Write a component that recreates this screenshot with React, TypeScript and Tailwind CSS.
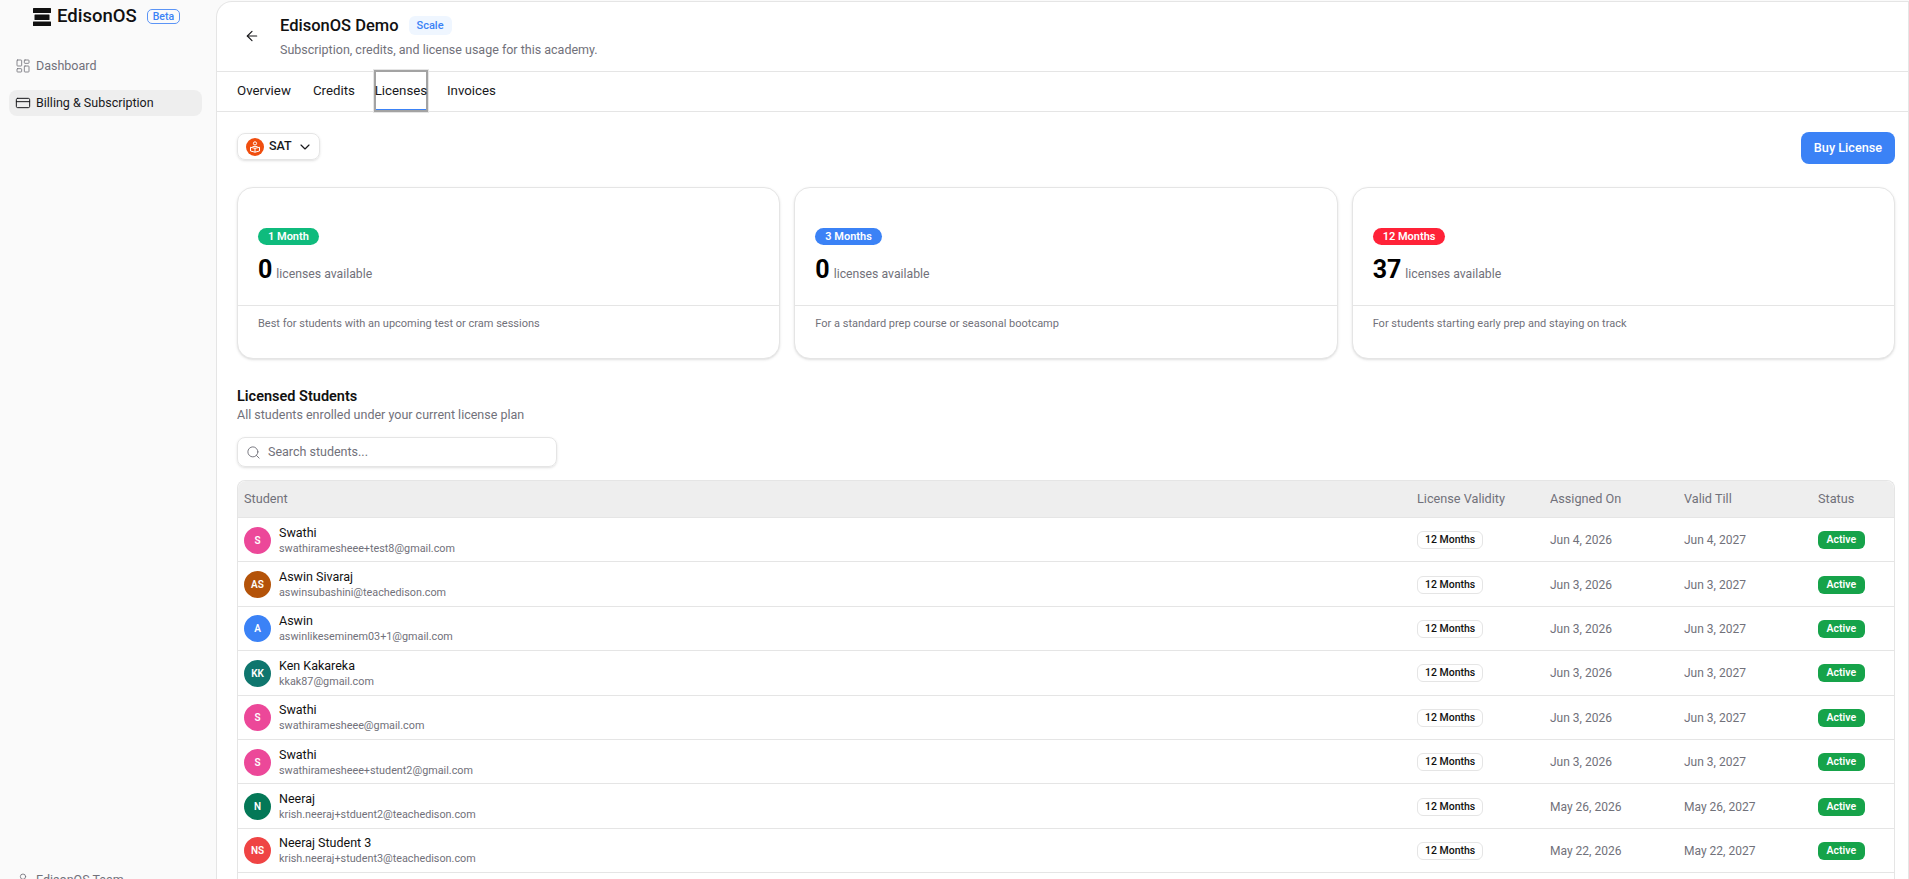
import { ArrowLeft, ChevronDown, CreditCard, LayoutDashboard, Search, User } from "lucide-react";

const students = [
	{ name: "Swathi", email: "swathiramesheee+test8@gmail.com", initials: "S", color: "bg-[#ec4899]", assigned: "Jun 4, 2026", till: "Jun 4, 2027" },
	{ name: "Aswin Sivaraj", email: "aswinsubashini@teachedison.com", initials: "AS", color: "bg-[#b45309]", assigned: "Jun 3, 2026", till: "Jun 3, 2027" },
	{ name: "Aswin", email: "aswinlikeseminem03+1@gmail.com", initials: "A", color: "bg-[#3b82f6]", assigned: "Jun 3, 2026", till: "Jun 3, 2027" },
	{ name: "Ken Kakareka", email: "kkak87@gmail.com", initials: "KK", color: "bg-[#0f766e]", assigned: "Jun 3, 2026", till: "Jun 3, 2027" },
	{ name: "Swathi", email: "swathiramesheee@gmail.com", initials: "S", color: "bg-[#ec4899]", assigned: "Jun 3, 2026", till: "Jun 3, 2027" },
	{ name: "Swathi", email: "swathiramesheee+student2@gmail.com", initials: "S", color: "bg-[#ec4899]", assigned: "Jun 3, 2026", till: "Jun 3, 2027" },
	{ name: "Neeraj", email: "krish.neeraj+stduent2@teachedison.com", initials: "N", color: "bg-[#047857]", assigned: "May 26, 2026", till: "May 26, 2027" },
	{ name: "Neeraj Student 3", email: "krish.neeraj+student3@teachedison.com", initials: "NS", color: "bg-[#ef4444]", assigned: "May 22, 2026", till: "May 22, 2027" },
];

const plans = [
	{ label: "1 Month", color: "bg-[#0fbb7d]", count: 0, note: "Best for students with an upcoming test or cram sessions" },
	{ label: "3 Months", color: "bg-[#3b82f6]", count: 0, note: "For a standard prep course or seasonal bootcamp" },
	{ label: "12 Months", color: "bg-[#ff2238]", count: 37, note: "For students starting early prep and staying on track" },
];

const cols = "grid grid-cols-[1173px_133px_134px_134px_1fr]";

function Sidebar() {
	return (
		<aside className="flex h-full w-[216px] shrink-0 flex-col bg-[#fafafa] pr-[14px] pl-[9px]">
			<div className="flex h-[33px] items-center pl-6">
				<svg width="18" height="18" viewBox="0 0 18 18" className="mr-[6px]">
					<rect x="0" y="0" width="18" height="5" rx="0.5" fill="#111" />
					<rect x="1.5" y="6.5" width="15" height="5.5" rx="0.5" fill="#111" />
					<rect x="0" y="13.5" width="18" height="4.5" rx="0.5" fill="#111" />
				</svg>
				<span className="text-[18.5px] leading-none font-medium text-[#111]">EdisonOS</span>
				<span className="ml-[10px] rounded-[5px] border border-[#5b94f6] px-[5px] text-[10.5px] leading-[13px] font-medium text-[#3b82f6]">Beta</span>
			</div>
			<nav className="mt-[20px] flex flex-col gap-[11px]">
				<a className="flex h-[26px] items-center gap-[5px] px-[6px] text-[12.5px] text-[#71717a]">
					<LayoutDashboard size={16} strokeWidth={1.25} />
					Dashboard
				</a>
				<a className="flex h-[26px] items-center gap-[5px] rounded-lg bg-[#eeeeee] px-[6px] text-[12.5px] text-[#18181b]">
					<CreditCard size={16} strokeWidth={1.5} />
					Billing &amp; Subscription
				</a>
			</nav>
			<div className="mt-auto mb-[-11px] flex h-5 items-center gap-[5px] px-[6px] text-[12.5px] text-[#71717a]">
				<User size={16} strokeWidth={1.25} />
				EdisonOS Team
			</div>
		</aside>
	);
}

function Header() {
	return (
		<>
			<div className="flex h-[70px] shrink-0 items-center border-b border-[#e5e5e5] pb-[2px] pl-[27px]">
				<ArrowLeft size={16} strokeWidth={1.75} className="text-[#18181b]" />
				<div className="ml-[20px]">
					<div className="flex items-center gap-[10px]">
						<h1 className="text-[16.5px] leading-6 font-medium text-[#111]">EdisonOS Demo</h1>
						<span className="rounded-md bg-[#eff6ff] px-2 text-[11px] leading-[19px] font-medium text-[#3b82f6]">Scale</span>
					</div>
					<p className="mt-[4px] text-[12.5px] leading-4 text-[#71717a]">Subscription, credits, and license usage for this academy.</p>
				</div>
			</div>
			<div className="flex h-[40px] shrink-0 items-center border-b border-[#e5e5e5] pb-px pl-5 text-[13.3px] text-[#18181b]">
				<span>Overview</span>
				<span className="ml-[22px]">Credits</span>
				<span className="ml-[19px] flex h-[42px] w-[54px] items-center justify-center border-2 border-[#a3a3a3] shadow-[inset_0_-1px_0_#3b82f6,0_0_0_1px_#e5e5e5]">Licenses</span>
				<span className="ml-[19px]">Invoices</span>
			</div>
		</>
	);
}

function PlanCard({ plan }: { plan: (typeof plans)[number] }) {
	return (
		<div className="flex h-[172px] flex-col rounded-2xl border border-[#e5e5e5] bg-white shadow-sm">
			<div className="flex h-[118px] flex-col justify-end border-b border-[#e5e5e5] px-5 pb-[19px]">
				<span className={`w-fit rounded-full px-[10px] text-[11px] leading-[17px] font-semibold text-white ${plan.color}`}>{plan.label}</span>
				<div className="mt-[9px] flex items-baseline gap-[4px]">
					<span className="text-[25px] leading-8 font-bold text-black">{plan.count}</span>
					<span className="text-[12.25px] text-[#71717a]">licenses available</span>
				</div>
			</div>
			<p className="px-5 pt-[10px] text-[11px] leading-4 text-[#71717a]">{plan.note}</p>
		</div>
	);
}

function StudentRow({ s }: { s: (typeof students)[number] }) {
	return (
		<div className={`${cols} h-[44.4px] items-center border-b border-[#e5e5e5] pt-px pl-[6px]`}>
			<div className="flex items-center gap-2">
				<div className={`flex h-[27px] w-[27px] items-center justify-center rounded-full text-[10px] font-semibold text-white ${s.color}`}>{s.initials}</div>
				<div>
					<div className="text-[12.5px] leading-4 text-[#111]">{s.name}</div>
					<div className="mt-[1px] text-[10.8px] leading-[14px] text-[#71717a]">{s.email}</div>
				</div>
			</div>
			<div className="flex">
				<span className="rounded-md border border-[#e5e5e5] px-[7px] text-[10.5px] leading-4 font-medium text-[#111]">12 Months</span>
			</div>
			<div className="text-[12px] text-[#71717a]">{s.assigned}</div>
			<div className="text-[12px] text-[#71717a]">{s.till}</div>
			<div className="flex">
				<span className="rounded-md bg-[#16a34a] px-[8.5px] text-[10.5px] leading-[18px] font-semibold text-white">Active</span>
			</div>
		</div>
	);
}

export default function App() {
	return (
		<div className="flex h-screen overflow-hidden bg-[#fafafa] font-['Roboto',sans-serif]">
			<Sidebar />
			<main className="mt-px flex min-w-0 flex-1 flex-col overflow-hidden rounded-tl-2xl border-t border-r border-l border-[#e5e5e5] bg-white">
				<Header />
				<div className="pt-[20px] pr-[13px] pl-5">
					<div className="flex items-start justify-between">
						<button type="button" className="mt-[1px] flex h-[27px] items-center gap-[5px] rounded-lg border border-[#e5e5e5] pr-[6px] pl-2 text-[12.5px] font-medium text-[#18181b] shadow-sm">
							<svg width="18" height="18" viewBox="0 0 18 18">
								<circle cx="9" cy="9" r="9" fill="#f04e0f" />
								<circle cx="9" cy="5.4" r="1.6" fill="none" stroke="#fff" strokeWidth="1" />
								<path d="M4.5 9.2L9 10.4L13.5 9.2V13L9 14.2L4.5 13ZM9 10.4V14.2M6.5 8.6H11.5" fill="none" stroke="#fff" strokeWidth="1" />
							</svg>
							SAT
							<ChevronDown size={16} strokeWidth={1.75} />
						</button>
						<button type="button" className="h-[32px] w-[94px] rounded-lg bg-[#3b82f6] text-[12.7px] font-medium text-white">Buy License</button>
					</div>
					<div className="mt-[23px] grid grid-cols-3 gap-[14px]">
						{plans.map((p) => (
							<PlanCard key={p.label} plan={p} />
						))}
					</div>
					<h2 className="mt-[28px] text-[14.5px] leading-5 font-semibold text-[#111]">Licensed Students</h2>
					<p className="text-[12.5px] leading-4 text-[#71717a]">All students enrolled under your current license plan</p>
					<div className="mt-[14px] flex h-[30px] w-[320px] items-center gap-[7px] rounded-lg border border-[#e5e5e5] px-2 text-[12.5px] text-[#71717a] shadow-sm">
						<Search size={15} strokeWidth={1.5} />
						Search students...
					</div>
					<div className="mt-[13px] rounded-t-lg border-x border-t border-[#e5e5e5]">
						<div className={`${cols} h-[37px] items-center rounded-t-lg border-b border-[#e5e5e5] bg-[#eeeeee] pl-[6px] text-[12.7px] text-[#71717a]`}>
							<div>Student</div>
							<div>License Validity</div>
							<div>Assigned On</div>
							<div>Valid Till</div>
							<div>Status</div>
						</div>
						{students.map((s) => (
							<StudentRow key={s.email} s={s} />
						))}
						<div className="h-[44px]" />
					</div>
				</div>
			</main>
		</div>
	);
}
